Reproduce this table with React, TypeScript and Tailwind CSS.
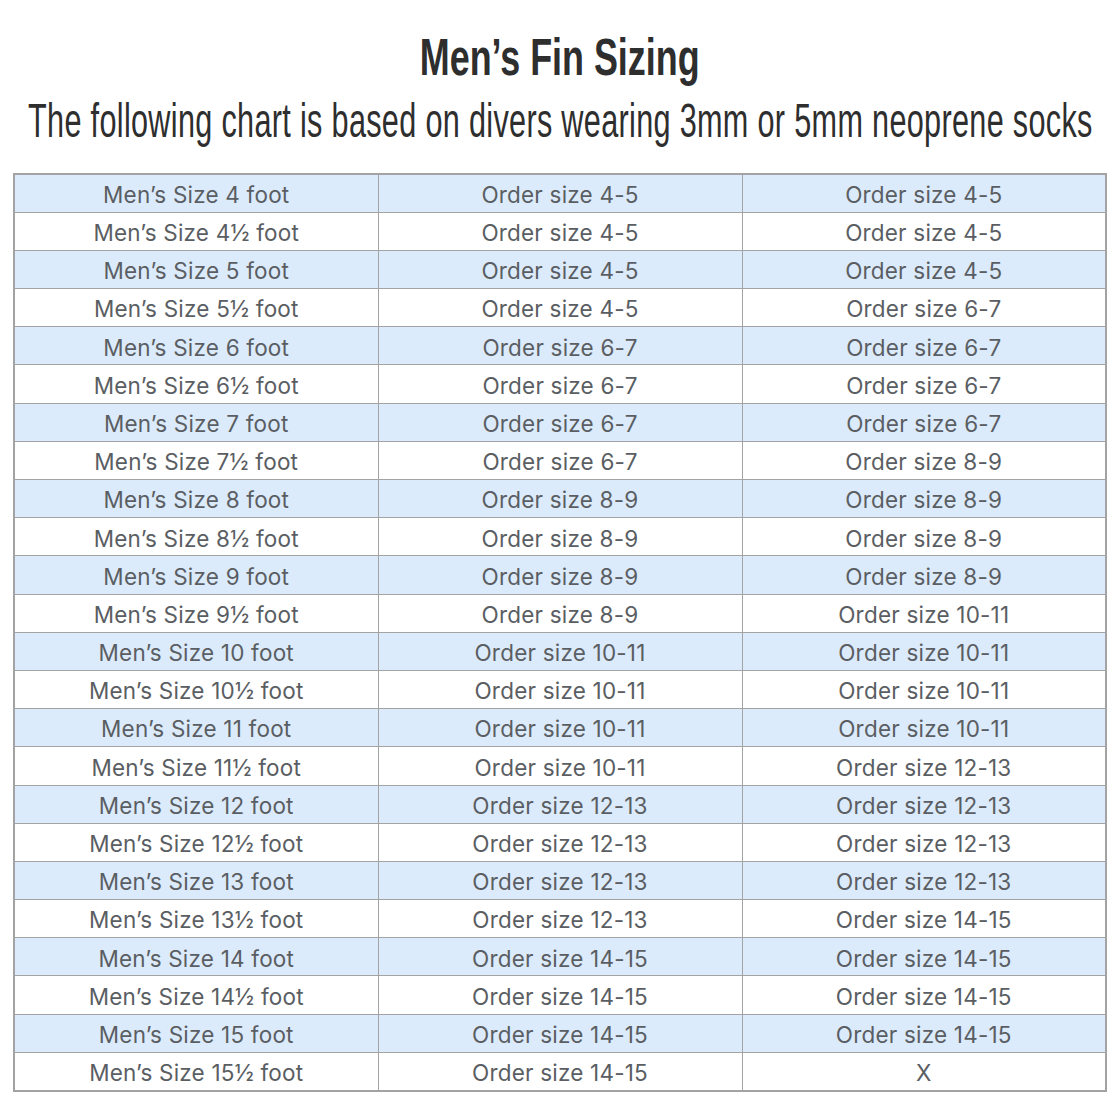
const rows: [string, string, string][] = [
  ["Men’s Size 4 foot", "Order size 4-5", "Order size 4-5"],
  ["Men’s Size 4½ foot", "Order size 4-5", "Order size 4-5"],
  ["Men’s Size 5 foot", "Order size 4-5", "Order size 4-5"],
  ["Men’s Size 5½ foot", "Order size 4-5", "Order size 6-7"],
  ["Men’s Size 6 foot", "Order size 6-7", "Order size 6-7"],
  ["Men’s Size 6½ foot", "Order size 6-7", "Order size 6-7"],
  ["Men’s Size 7 foot", "Order size 6-7", "Order size 6-7"],
  ["Men’s Size 7½ foot", "Order size 6-7", "Order size 8-9"],
  ["Men’s Size 8 foot", "Order size 8-9", "Order size 8-9"],
  ["Men’s Size 8½ foot", "Order size 8-9", "Order size 8-9"],
  ["Men’s Size 9 foot", "Order size 8-9", "Order size 8-9"],
  ["Men’s Size 9½ foot", "Order size 8-9", "Order size 10-11"],
  ["Men’s Size 10 foot", "Order size 10-11", "Order size 10-11"],
  ["Men’s Size 10½ foot", "Order size 10-11", "Order size 10-11"],
  ["Men’s Size 11 foot", "Order size 10-11", "Order size 10-11"],
  ["Men’s Size 11½ foot", "Order size 10-11", "Order size 12-13"],
  ["Men’s Size 12 foot", "Order size 12-13", "Order size 12-13"],
  ["Men’s Size 12½ foot", "Order size 12-13", "Order size 12-13"],
  ["Men’s Size 13 foot", "Order size 12-13", "Order size 12-13"],
  ["Men’s Size 13½ foot", "Order size 12-13", "Order size 14-15"],
  ["Men’s Size 14 foot", "Order size 14-15", "Order size 14-15"],
  ["Men’s Size 14½ foot", "Order size 14-15", "Order size 14-15"],
  ["Men’s Size 15 foot", "Order size 14-15", "Order size 14-15"],
  ["Men’s Size 15½ foot", "Order size 14-15", "X"],
];

export default function App() {
  return (
    <div className="w-[1120px] h-[1120px] bg-white flex flex-col items-center overflow-hidden">
      <header className="w-full flex flex-col items-center pt-[28px] text-[#2e2e2e] font-['Liberation_Sans',sans-serif]">
        <h1 className="text-[52px] leading-[58px] font-bold scale-x-[0.69] whitespace-nowrap">
          Men’s Fin Sizing
        </h1>
        <p className="mt-[7px] text-[48px] leading-[56px] scale-x-[0.638] whitespace-nowrap tracking-[0.5px]">
          The following chart is based on divers wearing 3mm or 5mm neoprene socks
        </p>
      </header>

      <table className="mt-[24px] w-[1094px] border-collapse border-2 border-[#a3a3a3] font-['Inter',sans-serif] text-[22.5px] tracking-[0.2px] text-[#5a5e63]">
        <tbody>
          {rows.map((r, i) => (
            <tr key={i} className={`h-[38.2px] ${i % 2 === 0 ? "bg-[#dcebfb]" : "bg-white"}`}>
              {r.map((c, j) => (
                <td key={j} className="w-1/3 border border-[#a3a3a3] text-center p-0 pt-[4px] leading-none">
                  {c}
                </td>
              ))}
            </tr>
          ))}
        </tbody>
      </table>
    </div>
  );
}
